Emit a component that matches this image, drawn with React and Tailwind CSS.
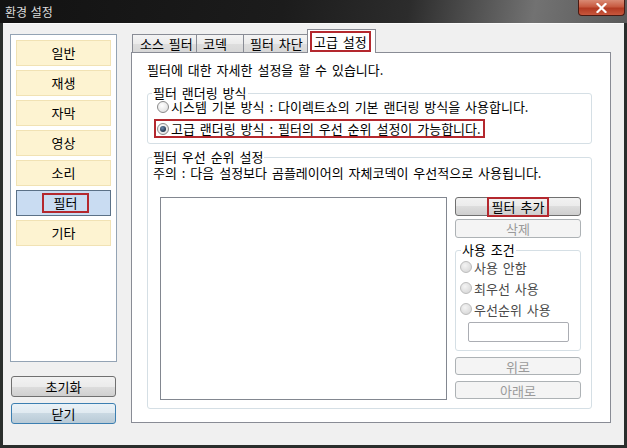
import React from "react";

function Radio({ checked, disabled }) {
  return (
    <span
      className={
        disabled
          ? "relative inline-block w-[12px] h-[12px] shrink-0 rounded-full border border-[#bcbcbc] bg-[radial-gradient(circle_at_40%_35%,#f4f4f4_0%,#dcdcdc_70%,#cfcfcf_100%)]"
          : "relative inline-block w-[12px] h-[12px] shrink-0 rounded-full border border-[#8a8a8a] bg-[radial-gradient(circle_at_40%_35%,#ffffff_0%,#e4e4e4_70%,#c8c8c8_100%)]"
      }
    >
      {checked && (
        <span className="absolute left-[2px] top-[2px] w-[6px] h-[6px] rounded-full bg-[radial-gradient(circle_at_40%_35%,#6e8db0_0%,#22364e_70%,#102030_100%)]" />
      )}
    </span>
  );
}

function Btn({ children, className = "", disabled, focus }) {
  let cls;
  if (disabled) {
    cls = "border border-[#adb2b5] bg-[#f4f4f4] text-[#9a9a9a]";
  } else if (focus) {
    cls =
      "border border-[#3c7fb1] bg-[linear-gradient(to_bottom,#eaf2f7_0%,#dfe9f0_50%,#c9d8e2_50%,#b8cad6_100%)] text-black";
  } else {
    cls =
      "border border-[#707070] bg-[linear-gradient(to_bottom,#f2f2f2_0%,#ebebeb_50%,#dddddd_50%,#cfcfcf_100%)] text-black";
  }
  return (
    <div
      className={
        "flex items-center justify-center rounded-[3px] leading-none " +
        cls +
        " " +
        className
      }
    >
      {children}
    </div>
  );
}

function Item({ children, selected }) {
  return selected ? (
    <div className="h-[26px] flex items-center justify-center border border-[#5b7187] bg-[#c9dcf2]">
      <span className="ml-[4px] h-[20px] w-[47px] flex items-center justify-center border-2 border-[#b4282e]">
        {children}
      </span>
    </div>
  ) : (
    <div className="h-[26px] flex items-center justify-center border border-[#f1e2b4] bg-[#fdf3d1]">
      {children}
    </div>
  );
}

export default function App() {
  return (
    <div className="w-[627px] h-[448px] flex flex-col overflow-hidden bg-[#1e1e1e] font-['Noto_Sans_CJK_KR','Liberation_Sans',sans-serif] text-[13px] [word-spacing:2px] text-black">
      {/* title bar */}
      <div className="relative h-[23px] shrink-0 flex items-center pl-[5px] bg-[linear-gradient(100deg,#121212_0%,#1c1c1c_45%,#2c2c2c_65%,#727272_85%,#5a5a5a_100%)]">
        <span className="text-[12px] text-[#dcdcdc] leading-none [word-spacing:1px]">환경 설정</span>
        <div className="absolute right-[2px] top-0 w-[47px] h-[16px] rounded-b-[4px] border border-t-0 border-[#4a1a12] bg-[linear-gradient(to_bottom,#d98a74_0%,#c75a40_45%,#b23a22_55%,#c8573d_100%)] flex items-center justify-center">
          <svg width="11" height="10" viewBox="0 0 11 10">
            <path d="M1.5 1 L9.5 9 M9.5 1 L1.5 9" stroke="#ffffff" strokeWidth="2.2" strokeLinecap="square" />
          </svg>
        </div>
      </div>
      {/* frame */}
      <div className="flex-1 flex px-[3px] pb-[3px] bg-[#2a2e2c]">
        <div className="flex-1 flex bg-[#f0f0f0] border-t border-[#fafafa]">
          {/* left column */}
          <div className="ml-[7px] mt-[10px] w-[107px] flex flex-col">
            <div className="h-[328px] border border-[#93a3b4] bg-white p-[5px] flex flex-col gap-[4px]">
              <Item>일반</Item>
              <Item>재생</Item>
              <Item>자막</Item>
              <Item>영상</Item>
              <Item>소리</Item>
              <Item selected>필터</Item>
              <Item>기타</Item>
            </div>
            <Btn className="mt-[14px] mx-[1px] h-[21px]">초기화</Btn>
            <Btn focus className="mt-[6px] mx-[1px] h-[21px]">닫기</Btn>
          </div>
          {/* tab control */}
          <div className="ml-[14px] mt-[5px] w-[480px] flex flex-col">
            <div className="h-[23px] flex items-end pl-[1px]">
              <div className="w-[65px] h-[18px] border border-b-0 border-[#898c95] bg-[linear-gradient(to_bottom,#f4f4f4_0%,#ebebeb_50%,#dedede_50%,#d7d7d7_100%)] pl-[7px] flex items-center leading-none whitespace-nowrap">
                소스 필터
              </div>
              <div className="-ml-px w-[48px] h-[18px] border border-b-0 border-[#898c95] bg-[linear-gradient(to_bottom,#f4f4f4_0%,#ebebeb_50%,#dedede_50%,#d7d7d7_100%)] pl-[6px] flex items-center leading-none whitespace-nowrap">
                코덱
              </div>
              <div className="-ml-px w-[65px] h-[18px] border border-b-0 border-[#898c95] bg-[linear-gradient(to_bottom,#f4f4f4_0%,#ebebeb_50%,#dedede_50%,#d7d7d7_100%)] pl-[6px] flex items-center leading-none whitespace-nowrap">
                필터 차단
              </div>
              <div className="relative z-10 -ml-px -mb-px w-[69px] h-[24px] border border-b-0 border-[#898c95] bg-white pl-[2px] pt-[1px] flex items-start">
                <span className="h-[21px] px-[2px] border-2 border-[#b4282e] flex items-center leading-none whitespace-nowrap">
                  고급 설정
                </span>
              </div>
            </div>
            <div className="h-[371px] border border-[#898c95] bg-white pl-[15px] flex flex-col">
              <div className="mt-[9px] h-[16px] leading-[16px] whitespace-nowrap">
                필터에 대한 자세한 설정을 할 수 있습니다.
              </div>
              {/* group 1 */}
              <div className="relative mt-[15px] w-[445px] h-[51px] rounded-[3px] border border-[#d5dfe5] pt-[3px] pl-[6px]">
                <span className="absolute left-[4px] -top-[7px] bg-white px-[1px] leading-[12px] whitespace-nowrap">
                  필터 랜더링 방식
                </span>
                <div className="flex">
                  <div className="h-[19px] border-2 border-transparent flex items-center pl-[1px] pr-[3px] gap-[2px]">
                    <Radio />
                    <span className="leading-none whitespace-nowrap">
                      시스템 기본 방식 : 다이렉트쇼의 기본 랜더링 방식을 사용합니다.
                    </span>
                  </div>
                </div>
                <div className="flex mt-[3px]">
                  <div className="h-[19px] border-2 border-[#b4282e] flex items-center pl-[1px] pr-[2px] gap-[2px]">
                    <Radio checked />
                    <span className="leading-none whitespace-nowrap">
                      고급 랜더링 방식 : 필터의 우선 순위 설정이 가능합니다.
                    </span>
                  </div>
                </div>
              </div>
              {/* group 2 */}
              <div className="relative mt-[13px] w-[445px] h-[252px] rounded-[3px] border border-[#d5dfe5] flex flex-col">
                <span className="absolute left-[4px] -top-[7px] bg-white px-[1px] leading-[12px] whitespace-nowrap">
                  필터 우선 순위 설정
                </span>
                <div className="mt-[7px] ml-[5px] h-[16px] leading-[16px] whitespace-nowrap">
                  주의 : 다음 설정보다 곰플레이어의 자체코덱이 우선적으로 사용됩니다.
                </div>
                <div className="flex mt-[16px]">
                  <div className="ml-[12px] w-[287px] h-[203px] border border-[#828790] bg-white" />
                  <div className="ml-[8px] w-[126px] flex flex-col">
                    <Btn className="h-[19px] relative">
                      <span className="h-[20px] px-[3px] border-2 border-[#b4282e] flex items-center leading-none whitespace-nowrap">
                        필터 추가
                      </span>
                    </Btn>
                    <Btn disabled className="mt-[3px] h-[19px]">
                      삭제
                    </Btn>
                    <div className="relative mt-[12px] h-[101px] rounded-[3px] border border-[#d5dfe5] pt-[7px] pl-[4px] flex flex-col">
                      <span className="absolute left-[5px] -top-[7px] bg-white px-[1px] leading-[12px] whitespace-nowrap">
                        사용 조건
                      </span>
                      <div className="h-[18px] flex items-center gap-[2px] text-[#4a4a4a]">
                        <Radio disabled />
                        <span className="leading-none whitespace-nowrap">사용 안함</span>
                      </div>
                      <div className="mt-[3px] h-[18px] flex items-center gap-[2px] text-[#4a4a4a]">
                        <Radio disabled />
                        <span className="leading-none whitespace-nowrap">최우선 사용</span>
                      </div>
                      <div className="mt-[3px] h-[18px] flex items-center gap-[2px] text-[#4a4a4a]">
                        <Radio disabled />
                        <span className="leading-none whitespace-nowrap">우선순위 사용</span>
                      </div>
                      <div className="mt-[4px] ml-[8px] w-[101px] h-[20px] border border-[#abadb3] rounded-[2px] bg-white" />
                    </div>
                    <Btn disabled className="mt-[6px] h-[18px]">
                      위로
                    </Btn>
                    <Btn disabled className="mt-[6px] h-[18px]">
                      아래로
                    </Btn>
                  </div>
                </div>
              </div>
            </div>
          </div>
        </div>
      </div>
    </div>
  );
}
